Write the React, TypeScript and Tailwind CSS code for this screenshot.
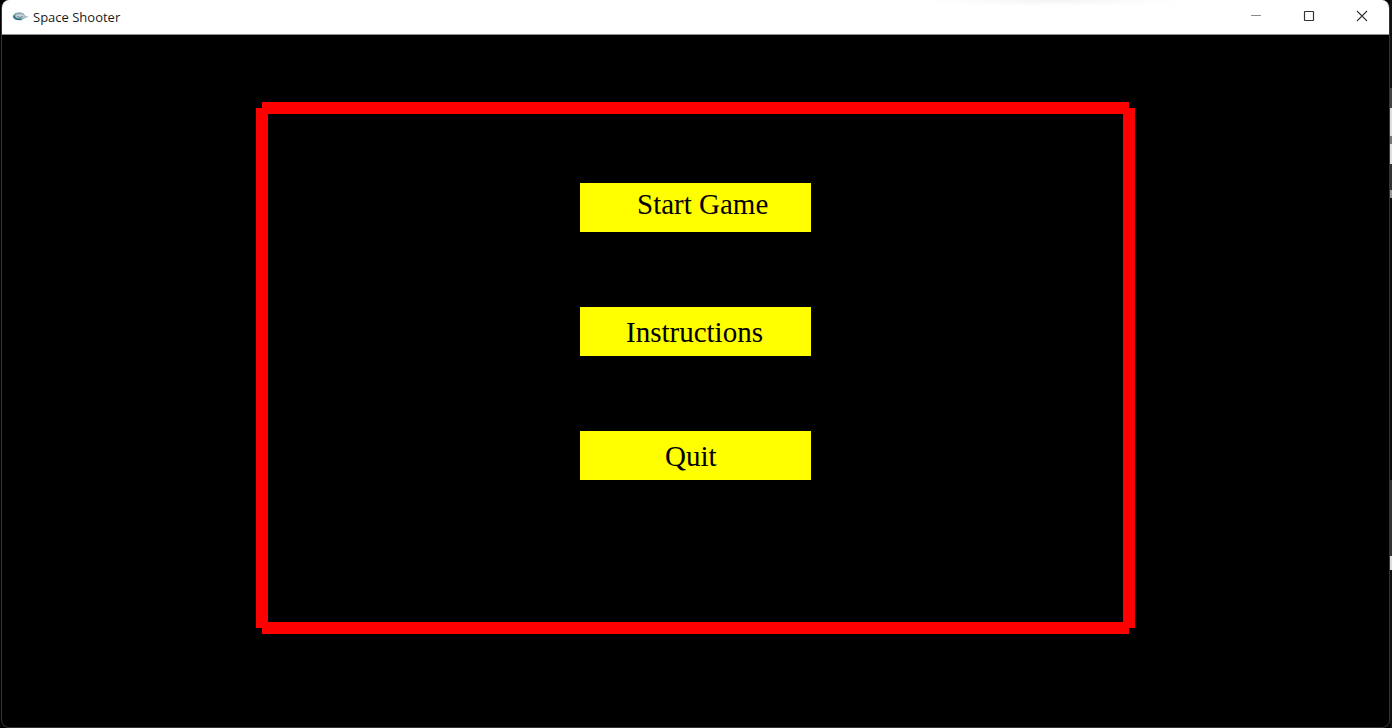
import type { ReactNode } from "react";

function ShipIcon() {
  return (
    <svg width="18" height="12" viewBox="0 0 18 12" aria-hidden="true">
      <ellipse cx="8" cy="5.2" rx="6" ry="3.8" fill="#7fa3af" />
      <path d="M10 3 17.6 5.8 11 8.4Z" fill="#a9bcc4" />
      <ellipse cx="9" cy="5" rx="4.4" ry="1.9" fill="#c3d3d9" />
      <path d="M3 4.2C5 1.8 9.5 1.4 13 3.4" fill="none" stroke="#8fa9b3" strokeWidth="1" />
      <path d="M3 4.5C2.5 7.5 6 9 10.5 8.2" fill="none" stroke="#2f7080" strokeWidth="1.5" />
      <path d="M6 5.4c2 1.2 4 1 6 .3" fill="none" stroke="#5b8795" strokeWidth="1" />
    </svg>
  );
}

function WindowButton({ label, children }: { label: string; children: ReactNode }) {
  return (
    <button type="button" aria-label={label} className="flex h-8 w-[53px] items-center justify-center">
      <svg width="12" height="12" viewBox="0 0 12 12" fill="none" stroke="#333" strokeWidth="1">
        {children}
      </svg>
    </button>
  );
}

function TitleBar() {
  return (
    <header className="flex h-[35px] items-start justify-between border-b border-[#8a8f8c] bg-white bg-[radial-gradient(farthest-side_at_50%_0,#f3f3f3,#fff)] bg-[length:265px_6px] bg-[position:82%_0] bg-no-repeat pr-px pl-[9px]">
      <div className="flex h-[34px] items-center gap-1">
        <ShipIcon />
        <h1 className="font-['Open_Sans','Noto_Sans',sans-serif] text-[13px] leading-5 text-[#1a1a1a]">Space Shooter</h1>
      </div>
      <div className="flex">
        <WindowButton label="Minimize">
          <path d="M1 5.5h10" stroke="#8c8c8c" />
        </WindowButton>
        <WindowButton label="Maximize">
          <rect x="1.5" y="1.5" width="9" height="9" rx="0.5" strokeWidth="1.2" />
        </WindowButton>
        <WindowButton label="Close">
          <path d="m1 1 10 10M11 1 1 11" strokeWidth="1.1" />
        </WindowButton>
      </div>
    </header>
  );
}

const menu = [
  { label: "Start Game", inset: "pl-[57px] pb-[8px]" },
  { label: "Instructions", inset: "pl-[46px]" },
  { label: "Quit", inset: "pl-[85px]" },
];

function Menu() {
  return (
    <nav className="flex flex-col items-center gap-[75px] pt-[69px]">
      {menu.map((item) => (
        <button
          key={item.label}
          type="button"
          className={`flex h-[49px] w-[231px] items-center bg-[#ffff00] text-left font-['Liberation_Serif',serif] text-[29px] leading-8 text-black ${item.inset}`}
        >
          {item.label}
        </button>
      ))}
    </nav>
  );
}

function DesktopEdge() {
  return (
    <div aria-hidden="true" className="flex w-[2px] flex-col bg-[#111]">
      <div className="h-[88px]" />
      <div className="h-5 bg-[#444]" />
      <div className="h-7 bg-[#e0e0e0]" />
      <div className="h-2 bg-[#777]" />
      <div className="h-5 bg-[#e0e0e0]" />
      <div className="h-[26px] bg-[#333]" />
      <div className="h-2 bg-[#999]" />
      <div className="h-[282px] bg-[#0c0c0c]" />
      <div className="h-[76px] bg-[#333]" />
      <div className="h-[14px] bg-[#ddd]" />
    </div>
  );
}

export default function App() {
  return (
    <div className="flex min-h-screen bg-black pl-px">
      <div className="flex flex-1 flex-col overflow-hidden rounded-lg border-x border-b border-[#333] bg-black">
        <TitleBar />
        <main className="flex flex-1 flex-col px-[254px] pt-[67px] pb-[93px]">
          <section className="flex-1 border-[12px] border-[#ff0000] [clip-path:polygon(6px_0,calc(100%-6px)_0,calc(100%-6px)_6px,100%_6px,100%_calc(100%-6px),calc(100%-6px)_calc(100%-6px),calc(100%-6px)_100%,6px_100%,6px_calc(100%-6px),0_calc(100%-6px),0_6px,6px_6px)]">
            <Menu />
          </section>
        </main>
      </div>
      <DesktopEdge />
    </div>
  );
}
